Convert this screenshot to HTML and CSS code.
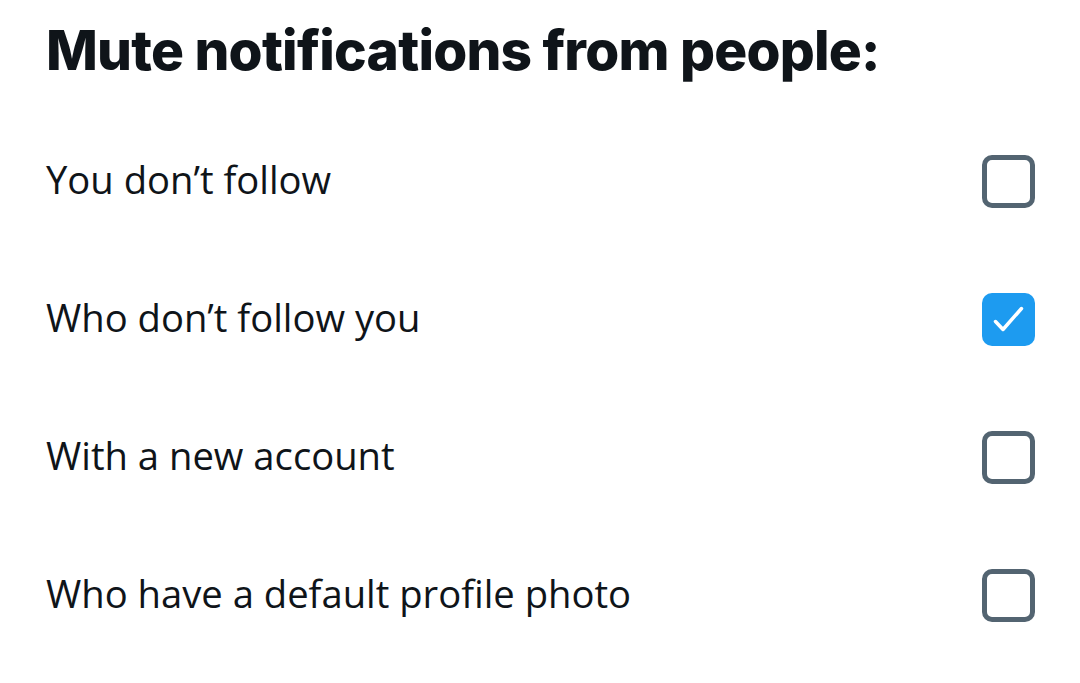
FILE: index.html
```html
<!DOCTYPE html>
<html>
<head>
<meta charset="utf-8">
<link rel="stylesheet" href="styles.css">
</head>
<body>
<main class="panel">
  <h1 class="title">Mute notifications from people:</h1>
  <ul class="options">
    <li class="option"><span class="label">You don’t follow</span><span class="check"></span></li>
    <li class="option"><span class="label">Who don’t follow you</span><span class="check checked"><svg viewBox="0 0 53 53" class="tick"><path d="M13.5 28.5L21 36.5L39.5 15.5" fill="none" stroke="#fff" stroke-width="3.5" stroke-linecap="round" stroke-linejoin="round"/></svg></span></li>
    <li class="option"><span class="label">With a new account</span><span class="check"></span></li>
    <li class="option"><span class="label">Who have a default profile photo</span><span class="check"></span></li>
  </ul>
</main>
</body>
</html>
```
FILE: styles.css
```css
html, body { margin: 0; padding: 0; background: #fff; }
.panel { padding: 0 45px 0 46px; color: #0f1419; }
.title {
  margin: 0;
  height: 112px;
  display: flex;
  align-items: center;
  font-family: Inter, "Liberation Sans", sans-serif;
  font-weight: 800;
  font-size: 55px;
  letter-spacing: -0.78px;
  padding-bottom: 12px;
  box-sizing: border-box;
}
.options { list-style: none; margin: 0; padding: 0; }
.option {
  height: 138px;
  display: flex;
  align-items: center;
  justify-content: space-between;
}
.label {
  font-family: "Open Sans", "Noto Sans", sans-serif;
  font-size: 38.2px;
  color: #0f1419;
  padding-bottom: 4px;
}
.check {
  width: 53px; height: 53px;
  box-sizing: border-box;
  border: 5px solid #536471;
  border-radius: 10px;
  display: flex; align-items: center; justify-content: center;
}
.check.checked { background: #1d9bf0; border: 0; }
.tick { width: 53px; height: 53px; display: block; }
```
